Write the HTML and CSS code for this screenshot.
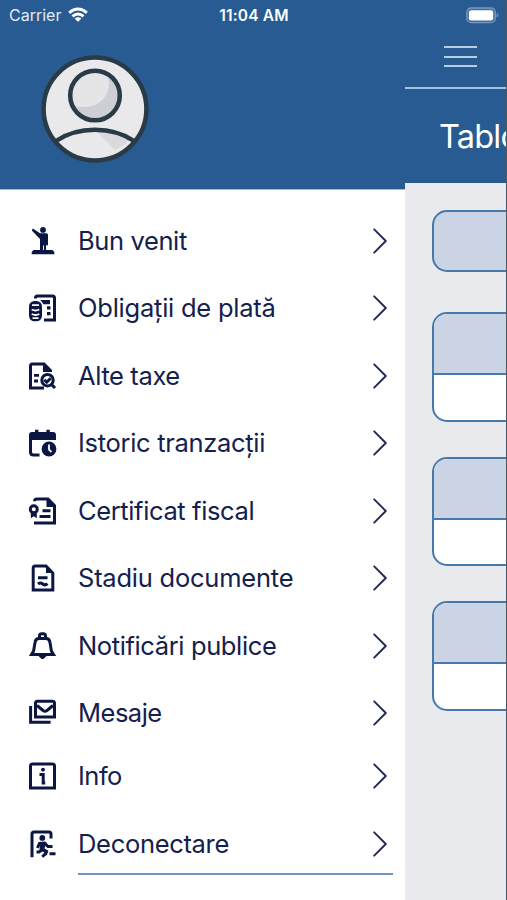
FILE: index.html
```html
<!DOCTYPE html>
<html lang="ro">
<head>
<meta charset="utf-8">
<meta name="viewport" content="width=device-width, initial-scale=1">
<title>Meniu</title>
<link rel="stylesheet" href="styles.css">
</head>
<body>
<svg class="defs" aria-hidden="true"><symbol id="chevron" viewBox="0 0 14 26"><path d="M1.2 1.3 12.8 13 1.2 24.7"/></symbol></svg>
<div class="phone">
  <div class="drawer">
    <header class="profile">
      <svg class="avatar" viewBox="0 0 108 108">
        <circle cx="54" cy="54" r="51.6" fill="#e9e9eb"/>
        <path d="M54 75 74 95Q84 91 89 83Q74 75 54 75Z" fill="#d9d9de"/>
        <circle cx="54" cy="40.5" r="24.6" fill="#e5e5e7"/>
        <path d="M66.500 19C73 42 56 56 33 51A24.6 24.6 0 1 0 66.500 19Z" fill="#cdced6"/>
        <g fill="none" stroke="#293b47" stroke-width="4.5"><circle cx="54" cy="54" r="51.4"/><circle cx="54" cy="40.5" r="24.8"/><path d="M15 86C37 71 71 71 93 86"/></g>
      </svg>
    </header>
    <nav class="menu">
      <a class="item"><svg class="icon" viewBox="0 0 28 28"><path class="f" d="M12 6.300h6.500q1.500 0 1.500 2v10h-2v4.700h6.500l1.800 2v2.200h-22.600V25l1.800-2h6.500V12L3.800 3.500 4.800 1.600Z"/><circle class="f" cx="15" cy="2.900" r="2.900"/><path class="cut thin" d="M15.500 18.500v4.500"/></svg><span class="label w1">Bun venit</span><svg class="chev"><use href="#chevron"/></svg></a>
      <a class="item"><svg class="icon" viewBox="0 0 28 28"><path class="s" d="M7.500 4.500V4q0-2 2-2h15q2 0 2 2v22H16"/><path class="f" d="M12.500 6h9.500v4.200h-6.500zM19 12.300h3.500v3.200H19zM19 18h3.500v3.200H19z"/><rect class="f" x="1" y="7" width="13" height="20.300" rx="5.500"/><path class="cut" d="M4 11.200h7M3.700 15.500q3.800 2 7.600 0M3.700 20q3.800 2 7.600 0M4.500 24.200h6"/></svg><span class="label w2">Obligații de plată</span><svg class="chev"><use href="#chevron"/></svg></a>
      <a class="item"><svg class="icon" viewBox="0 0 28 28"><path class="s" d="M22.500 10V8.500L16 2H4.500q-2 0-2 2v22H16"/><path class="f" d="M15 1l9 9h-9zM6 12h5v2.800H6zM6 17.500h4V20.500H6z"/><circle class="s" cx="19.500" cy="18.200" r="5.700"/><path class="s" d="m16.300 17.800 2.400 2.400 4-4M23.500 22.500l3.500 3.500"/></svg><span class="label w3">Alte taxe</span><svg class="chev"><use href="#chevron"/></svg></a>
      <a class="item"><svg class="icon" viewBox="0 0 28 28"><path class="f" d="M1 6q0-3 3-3h3V.8h3.400V3h8V.8h3.400V3H25q3 0 3 3v5H1Z"/><path class="s" d="M2.500 10v13q0 3 3 3h6"/><circle class="f" cx="21" cy="20" r="7.400"/><path class="cut" d="M21 15.500v5.200l2.500 2.300"/></svg><span class="label w4">Istoric tranzacții</span><svg class="chev"><use href="#chevron"/></svg></a>
      <a class="item"><svg class="icon" viewBox="0 0 28 28"><path class="s" d="M6.500 4.300Q6.500 2 9 2h11l6.500 6.500V26H6"/><path class="f" d="M18.500 1 28 10h-9.500z"/><path class="s" d="M14.500 13.700h8M11.500 19.500h11"/><circle class="s" cx="5.800" cy="12.200" r="3.500"/><path class="f" d="M2.800 15h6v6.300l-3-2-3 2z"/></svg><span class="label w5">Certificat fiscal</span><svg class="chev"><use href="#chevron"/></svg></a>
      <a class="item"><svg class="icon" viewBox="0 0 28 28"><path class="s" d="M18 2H7.200q-2 0-2 2v22h19.600V9Z"/><path class="f" d="M18 1l8 8h-8z"/><path class="s" d="M10 13.800h9.500M10 20q2.300-2 4.700 0t4.800-.4"/></svg><span class="label w6">Stadiu documente</span><svg class="chev"><use href="#chevron"/></svg></a>
      <a class="item"><svg class="icon" viewBox="0 0 28 28"><path class="s" d="M3.500 22.500h22L23.400 19 22 10.500Q21.500 6.500 18 6.500h-7q-3.500 0-4 4L5.600 19Z"/><path class="s" d="M11.500 6V4q0-2.200 2.200-2.200h1.600q2.200 0 2.200 2.200v2"/><path class="f" d="M10 23.500h9l-3 3q-1.500 1-3 0Z"/></svg><span class="label w7">Notificări publice</span><svg class="chev"><use href="#chevron"/></svg></a>
      <a class="item"><svg class="icon" viewBox="0 0 28 28"><path class="s" d="M9.500 2.200h15q2 0 2 2V18h-19V4.200q0-2 2-2Z"/><path class="s" d="M9 6.500 15 11.500q2 1.400 4 0L25 6.500M2.600 7v16.200h20"/></svg><span class="label w8">Mesaje</span><svg class="chev"><use href="#chevron"/></svg></a>
      <a class="item short"><svg class="icon" viewBox="0 0 28 28"><path class="s" d="M4.500 2h20q2 0 2 2v22H2.500V4q0-2 2-2Z"/><path class="s" d="M11.500 12.500h3.700v8.500h2"/><circle class="f" cx="15" cy="7.700" r="1.900"/></svg><span class="label w9">Info</span><svg class="chev"><use href="#chevron"/></svg></a>
      <a class="item last"><svg class="icon" viewBox="0 0 28 28"><path class="s" d="M4 27.200V4q0-2 2-2h15q2 0 2 2v4.500"/><circle class="f" cx="14.300" cy="7.900" r="2.900"/><path class="s" d="M9.500 18 11.500 13.500l5-.5 3.500 3.500h4.500"/><path class="f" d="M12.500 12h6l-2 6.500 4 2.300-1.500 4-4 3-1.700-2 3.200-3.300-5-2.500z"/><path class="s" d="M14 20l-3 2H8.500M21.500 23.800h6"/></svg><span class="label w10">Deconectare</span><svg class="chev"><use href="#chevron"/></svg></a>
    </nav>
  </div>
  <main class="page">
    <div class="topbar"><div class="burger"><i></i><i></i><i></i></div></div>
    <h1 class="title">Tablou</h1>
    <section class="cards">
      <div class="card single"></div>
      <div class="card"><div class="card-head"></div></div>
      <div class="card"><div class="card-head"></div></div>
      <div class="card"><div class="card-head"></div></div>
    </section>
  </main>
  <div class="status">
    <div class="carrier"><span>Carrier</span><svg class="wifi" viewBox="0 0 21 16"><g fill="none" stroke="#fff" stroke-width="3"><path d="M1.2 5.8Q10.5-2.2 19.8 5.8"/><path d="M4.7 9.5Q10.5 4.6 16.3 9.5"/></g><path fill="#fff" d="M7 11.6q3.500-2.600 7 0L10.500 15.300Z"/></svg></div>
    <span class="time">11:04 AM</span>
    <svg class="battery" viewBox="0 0 34 17"><rect x=".8" y=".8" width="29.4" height="15" rx="4.5" fill="#42709f" stroke="#7997ba" stroke-width="1.4"/><rect x="3" y="3" width="25" height="10.6" rx="2.3" fill="#fff"/><path d="M31.500 6q2 .4 2 2.300t-2 2.300z" fill="#6c8eb4"/></svg>
  </div>
  <div class="edge"></div>
</div>
</body>
</html>
```

FILE: styles.css
```css
* { box-sizing: border-box; }
body { margin: 0; overflow: hidden; font-family: Inter, "Liberation Sans", sans-serif; }
.defs { position: absolute; width: 0; height: 0; }
.phone { position: relative; display: flex; width: 507px; height: 900px; overflow: hidden; background: #e8eaed; }
.drawer { flex: 0 0 405px; background: #fff; }
.profile { height: 190px; padding: 55px 0 0 41px; background: #285b92; border-bottom: 1px solid #9db8d4; }
.avatar { display: block; width: 108px; height: 108px; }
.menu { display: flex; flex-direction: column; padding-top: 17.3px; }
.item { display: flex; align-items: center; flex: 0 0 67.43px; padding: 0 18px 0 28px; color: #14204d; }
.item.short { flex-basis: 59.4px; }
.item.last { flex-basis: 75px; }
.icon { flex: 0 0 28px; height: 28px; margin-right: 22px; overflow: visible; }
.f { fill: #0b1742; }
.s { fill: none; stroke: #0b1742; stroke-width: 3; }
.cut { fill: none; stroke: #fff; stroke-width: 1.8; }
.cut.thin { stroke-width: 1; }
.label { flex: 1; font-size: 25.5px; line-height: 32px; letter-spacing: -0.5px; white-space: nowrap; }
.w1, .w3, .w5, .w7 { letter-spacing: -0.38px; }
.w2, .w6 { letter-spacing: -0.23px; }
.w4, .w10 { letter-spacing: -0.31px; }
.chev { flex: 0 0 14px; height: 26px; fill: none; stroke: #242a50; stroke-width: 1.9; stroke-linecap: round; stroke-linejoin: round; }
.menu::after { content: ""; height: 2px; margin: -8px 12px 0 78px; background: #7195bb; }
.page { flex: 0 0 102px; overflow: hidden; }
.topbar { height: 89px; padding: 46px 0 0 39px; background: #285b92; border-bottom: 2px solid #a5c1df; }
.burger { display: flex; flex-direction: column; justify-content: space-between; width: 33px; height: 21px; }
.burger i { height: 2px; background: #b9cde3; }
.title { height: 94px; margin: 0; padding: 0 0 0 34px; background: #285b92; color: #fff; font-size: 32.5px; font-weight: 400; line-height: 95px; letter-spacing: -0.8px; white-space: nowrap; }
.cards { display: flex; flex-direction: column; gap: 35px; width: 140px; padding: 27px 0 0 27px; }
.card { height: 109.5px; border: 2px solid #4679a9; border-radius: 15px; background: #fff; overflow: hidden; }
.card.single { height: 62px; margin-bottom: 5px; background: #cbd4e4; }
.card-head { height: 61px; background: #cbd4e4; border-bottom: 2px solid #4679a9; }
.status { position: absolute; inset: 0 0 auto 0; display: grid; grid-template-columns: 1fr auto 1fr; align-items: center; height: 30px; padding: 0 8px 0 9px; color: #fff; font-size: 16px; }
.carrier { display: flex; align-items: center; gap: 7px; color: #e3eaf3; }
.wifi { width: 20px; height: 16px; }
.time { font-weight: 600; font-size: 15.5px; letter-spacing: 0.2px; }
.battery { justify-self: end; width: 33px; height: 17px; }
.edge { position: absolute; inset: 0 0 0 auto; width: 1px; background: #4b5663; }
```
